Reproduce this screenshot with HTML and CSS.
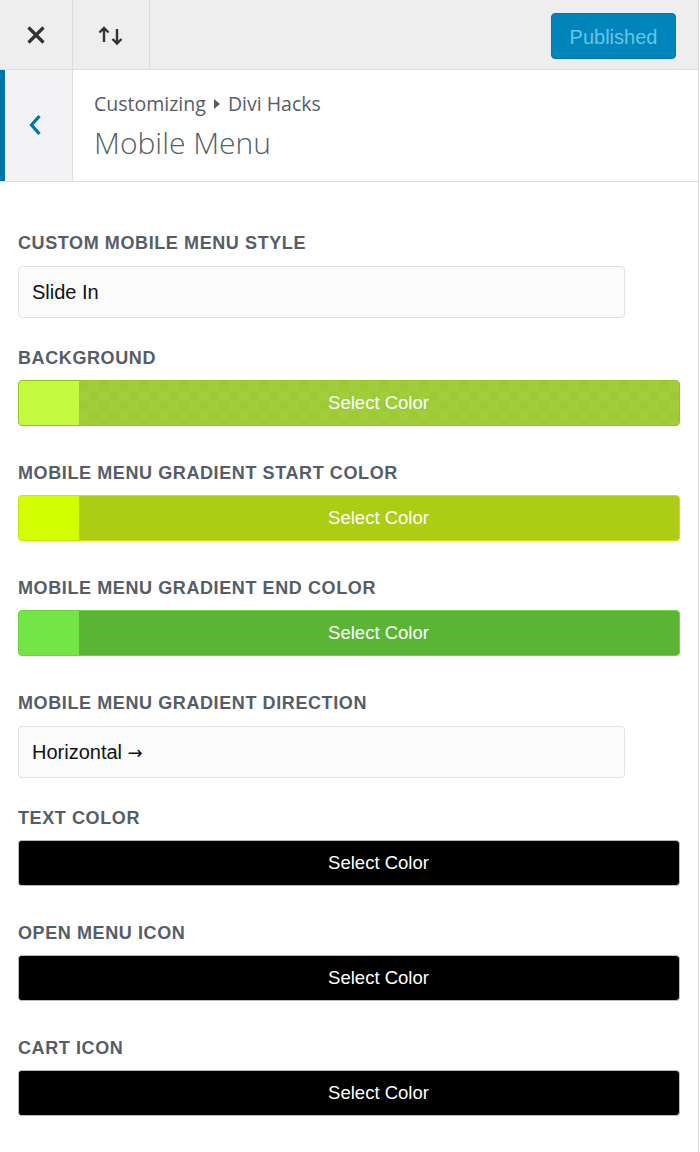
FILE: index.html
```html
<!DOCTYPE html>
<html>
<head>
<meta charset="utf-8">
<link rel="stylesheet" href="styles.css">
</head>
<body>
<div class="panel">
  <header class="topbar">
    <button class="tb-btn close" aria-label="Close">
      <svg width="20" height="20" viewBox="0 0 20 20"><path d="M2.5 2.5 L17.5 17.5 M17.5 2.5 L2.5 17.5" stroke="#333" stroke-width="3.2" fill="none"/></svg>
    </button>
    <button class="tb-btn reorder" aria-label="Reorder">
      <svg width="28" height="22" viewBox="0 0 28 22"><path d="M7 18 V4 M2.5 8.5 L7 4 L11.5 8.5" stroke="#333" stroke-width="2.4" fill="none"/><path d="M20 5 V19.5 M15.5 15 L20 19.5 L24.5 15" stroke="#333" stroke-width="2.4" fill="none"/></svg>
    </button>
    <div class="spacer"></div>
    <button class="publish">Published</button>
  </header>
  <section class="sechead">
    <button class="back" aria-label="Back">
      <svg width="14" height="22" viewBox="0 0 14 22"><path d="M11.5 2 L3.5 11 L11.5 20" stroke="#0073aa" stroke-width="3.2" fill="none"/></svg>
    </button>
    <div class="titles">
      <div class="crumb">Customizing <span class="tri"></span> Divi Hacks</div>
      <h1 class="title">Mobile Menu</h1>
    </div>
  </section>
  <main class="controls">
    <div class="ctl">
      <label class="lbl">Custom Mobile Menu Style</label>
      <div class="select">Slide In</div>
    </div>
    <div class="ctl">
      <label class="lbl">Background</label>
      <div class="colorbtn c1"><span class="swatch"></span><span class="sel">Select Color</span></div>
    </div>
    <div class="ctl">
      <label class="lbl">Mobile Menu Gradient Start Color</label>
      <div class="colorbtn c2"><span class="swatch"></span><span class="sel">Select Color</span></div>
    </div>
    <div class="ctl">
      <label class="lbl">Mobile Menu Gradient End Color</label>
      <div class="colorbtn c3"><span class="swatch"></span><span class="sel">Select Color</span></div>
    </div>
    <div class="ctl">
      <label class="lbl">Mobile Menu Gradient Direction</label>
      <div class="select">Horizontal <span class="arrow">→</span></div>
    </div>
    <div class="ctl">
      <label class="lbl">Text Color</label>
      <div class="colorbtn black"><span class="swatch"></span><span class="sel">Select Color</span></div>
    </div>
    <div class="ctl">
      <label class="lbl">Open Menu Icon</label>
      <div class="colorbtn black"><span class="swatch"></span><span class="sel">Select Color</span></div>
    </div>
    <div class="ctl">
      <label class="lbl">Cart Icon</label>
      <div class="colorbtn black"><span class="swatch"></span><span class="sel">Select Color</span></div>
    </div>
  </main>
</div>
</body>
</html>
```
FILE: styles.css
```css
* { box-sizing: border-box; }
html, body { margin: 0; padding: 0; background: #fff; }
body { font-family: "Liberation Sans", Arial, sans-serif; }

.panel {
  width: 699px;
  min-height: 1152px;
  border-right: 1px solid #ddd;
  background: #fff;
}

.topbar {
  display: flex;
  align-items: center;
  height: 70px;
  background: #eee;
  border-bottom: 1px solid #ddd;
}
.tb-btn {
  height: 69px;
  border: 0;
  background: transparent;
  border-right: 1px solid #ddd;
  display: flex;
  align-items: center;
  justify-content: center;
  padding: 0;
}
.tb-btn.close { width: 73px; }
.tb-btn.reorder { width: 77px; }
.spacer { flex: 1; }
.publish {
  width: 125px;
  height: 46px;
  margin: 2px 22px 0 0;
  background: #0085ba;
  border: 1px solid #0079aa;
  border-radius: 4px;
  color: #66c6e4;
  font-family: "Liberation Sans", Arial, sans-serif;
  font-size: 20px;
  padding: 3px 0 0 0;
}

.sechead {
  display: flex;
  height: 112px;
  border-bottom: 1px solid #ddd;
  background: #fff;
}
.back {
  width: 73px;
  border: 0;
  border-left: 5px solid #0073aa;
  border-right: 1px solid #ddd;
  background: #f3f3f5;
  display: flex;
  align-items: center;
  justify-content: center;
  padding: 0 7px 2px 0;
}
.titles {
  padding: 20px 0 0 21px;
  color: #555d66;
  font-family: "Open Sans", sans-serif;
}
.crumb {
  font-size: 19.5px;
  line-height: 28px;
  display: flex;
  align-items: center;
  white-space: pre;
}
.tri {
  display: inline-block;
  width: 0; height: 0;
  border-top: 5px solid transparent;
  border-bottom: 5px solid transparent;
  border-left: 6px solid #555d66;
  margin: 0 3px 0 3px;
}
.title {
  margin: 5px 0 0 0;
  font-size: 30px;
  line-height: 40px;
  font-weight: 300;
}

.controls {
  padding: 51px 18px 20px 18px;
  display: flex;
  flex-direction: column;
  gap: 30px;
}
.ctl {
  display: flex;
  flex-direction: column;
}
.lbl {
  display: block;
  color: #555d66;
  text-transform: uppercase;
  font-weight: 700;
  font-size: 18px;
  letter-spacing: 0.6px;
  line-height: 20px;
  margin-bottom: 13px;
}
.select {
  width: 607px;
  height: 52px;
  background: #fbfbfb;
  border: 1px solid #e2e2e2;
  border-radius: 4px;
  padding: 0 13px;
  display: flex;
  align-items: center;
  font-size: 20px;
  color: #111;
  white-space: pre;
}
.arrow {
  font-family: "DejaVu Sans", sans-serif;
  font-size: 18px;
}
.colorbtn {
  width: 662px;
  height: 46px;
  border-radius: 4px;
  display: flex;
  overflow: hidden;
  border: 1px solid #ccc;
  margin-top: -1px;
  margin-bottom: 7px;
}
.swatch { width: 60px; flex: none; }
.sel {
  flex: 1;
  display: flex;
  align-items: center;
  justify-content: center;
  color: #fff;
  font-size: 18.5px;
  padding-right: 1px;
}
.c1 {
  border-color: #96c51a;
  background-color: #9ecb35;
  background-image:
    linear-gradient(45deg, rgba(255,255,255,0.04) 25%, transparent 25%, transparent 75%, rgba(255,255,255,0.04) 75%),
    linear-gradient(45deg, rgba(255,255,255,0.04) 25%, transparent 25%, transparent 75%, rgba(255,255,255,0.04) 75%);
  background-size: 20px 20px;
  background-position: 0 0, 10px 10px;
}
.c1 .swatch { background: #c4fb40; }
.c2 { border-color: #c7e600; background: #accd12; }
.c2 .swatch { background: #d4ff00; }
.c3 { border-color: #66d93a; background: #5bb535; }
.c3 .swatch { background: #73e646; }
.black { background: #000; border-color: #bbb; }
.black .swatch { background: #000; }
```
